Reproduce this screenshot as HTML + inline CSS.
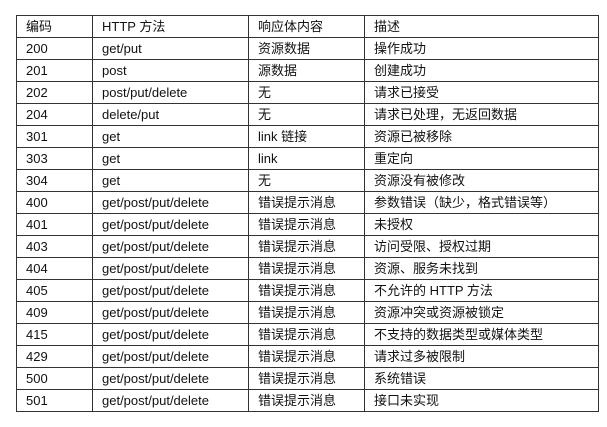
<!DOCTYPE html>
<html><head><meta charset="utf-8"><style>
body{margin:0;background:#fff;width:607px;height:427px;overflow:hidden}
table{position:absolute;left:16px;top:15px;border-collapse:collapse;font-family:"Liberation Sans","Noto Sans CJK SC",sans-serif;font-size:13px;color:#111}
td{border:1px solid #333;height:21px;padding:0 0 0 9px;line-height:21px;white-space:nowrap;box-sizing:border-box}
td:nth-child(1){width:76px}td:nth-child(2){width:156px}td:nth-child(3){width:116px}td:nth-child(4){width:234px}
tr{height:22px}
</style></head><body>
<table>
<tr><td>编码</td><td>HTTP 方法</td><td>响应体内容</td><td>描述</td></tr>
<tr><td>200</td><td>get/put</td><td>资源数据</td><td>操作成功</td></tr>
<tr><td>201</td><td>post</td><td>源数据</td><td>创建成功</td></tr>
<tr><td>202</td><td>post/put/delete</td><td>无</td><td>请求已接受</td></tr>
<tr><td>204</td><td>delete/put</td><td>无</td><td>请求已处理，无返回数据</td></tr>
<tr><td>301</td><td>get</td><td>link 链接</td><td>资源已被移除</td></tr>
<tr><td>303</td><td>get</td><td>link</td><td>重定向</td></tr>
<tr><td>304</td><td>get</td><td>无</td><td>资源没有被修改</td></tr>
<tr><td>400</td><td>get/post/put/delete</td><td>错误提示消息</td><td>参数错误（缺少，格式错误等）</td></tr>
<tr><td>401</td><td>get/post/put/delete</td><td>错误提示消息</td><td>未授权</td></tr>
<tr><td>403</td><td>get/post/put/delete</td><td>错误提示消息</td><td>访问受限、授权过期</td></tr>
<tr><td>404</td><td>get/post/put/delete</td><td>错误提示消息</td><td>资源、服务未找到</td></tr>
<tr><td>405</td><td>get/post/put/delete</td><td>错误提示消息</td><td>不允许的 HTTP 方法</td></tr>
<tr><td>409</td><td>get/post/put/delete</td><td>错误提示消息</td><td>资源冲突或资源被锁定</td></tr>
<tr><td>415</td><td>get/post/put/delete</td><td>错误提示消息</td><td>不支持的数据类型或媒体类型</td></tr>
<tr><td>429</td><td>get/post/put/delete</td><td>错误提示消息</td><td>请求过多被限制</td></tr>
<tr><td>500</td><td>get/post/put/delete</td><td>错误提示消息</td><td>系统错误</td></tr>
<tr><td>501</td><td>get/post/put/delete</td><td>错误提示消息</td><td>接口未实现</td></tr>
</table>
</body></html>
